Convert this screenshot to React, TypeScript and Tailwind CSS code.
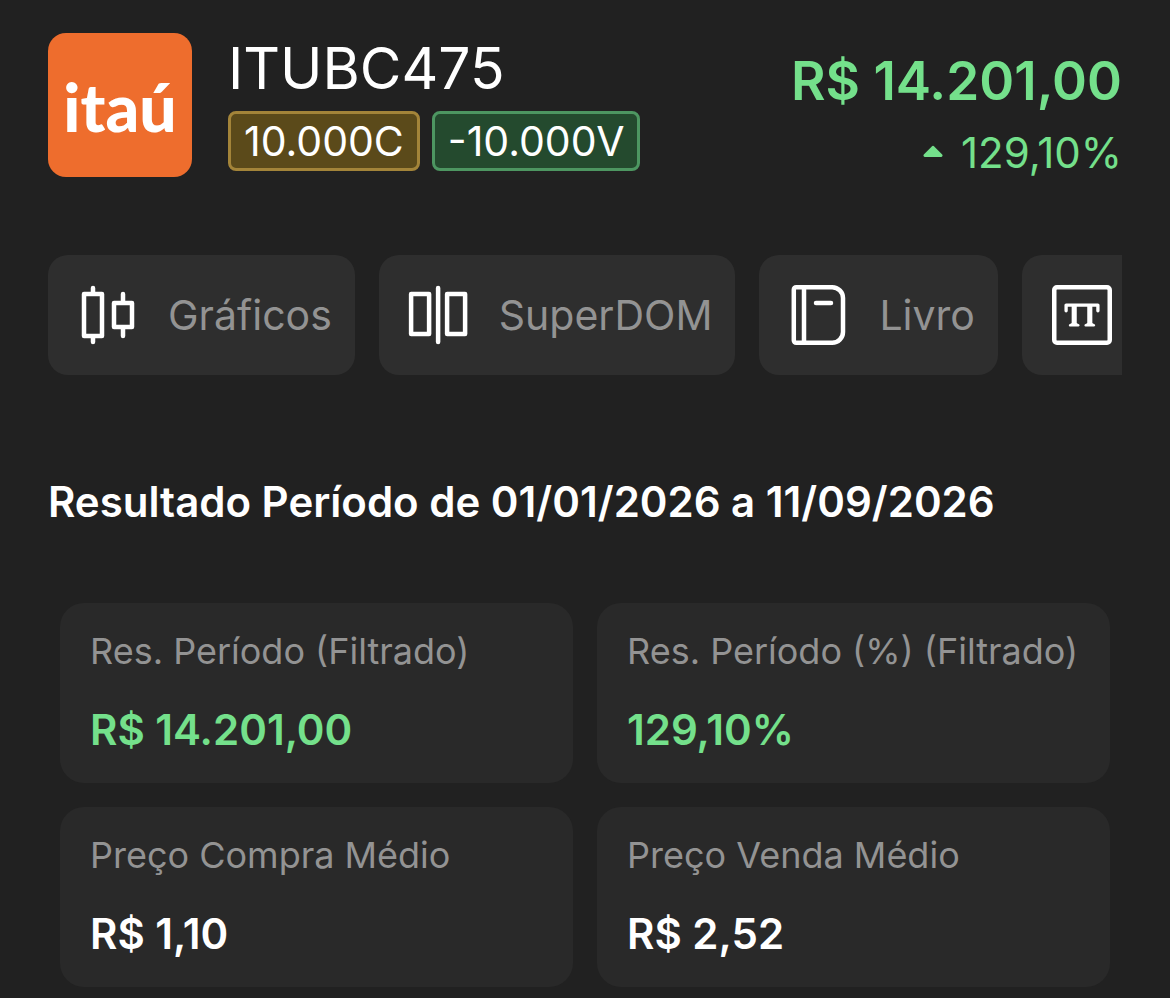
import React from 'react';

const ACTIONS = [
  { label: 'Gráficos', icon: <CandlesIcon /> },
  { label: 'SuperDOM', icon: <DomIcon /> },
  { label: 'Livro', icon: <BookIcon /> },
];

const RESULTS = [
  { label: 'Res. Período (Filtrado)', value: 'R$ 14.201,00', color: 'text-[#74e08b]' },
  { label: 'Res. Período (%) (Filtrado)', value: '129,10%', color: 'text-[#74e08b]' },
  { label: 'Preço Compra Médio', value: 'R$ 1,10', color: 'text-white' },
  { label: 'Preço Venda Médio', value: 'R$ 2,52', color: 'text-white' },
];

function Icon({ children }: { children: React.ReactNode }) {
  return (
    <svg
      viewBox="0 0 24 24"
      className="size-[72px] shrink-0 text-white"
      fill="none"
      stroke="currentColor"
      strokeWidth="1.5"
      strokeLinecap="round"
      strokeLinejoin="round"
      aria-hidden="true"
    >
      {children}
    </svg>
  );
}

function CandlesIcon() {
  return (
    <Icon>
      <path d="M4 5h6v14H4zM7 3v2M7 19v2M14 8h6v8h-6zM17 5v3M17 16v3" />
    </Icon>
  );
}

function DomIcon() {
  return (
    <Icon>
      <path d="M2.7 5h6v13.3h-6zM14.7 5h6v13.3h-6zM11.7 3v18" />
    </Icon>
  );
}

function BookIcon() {
  return (
    <Icon>
      <path d="M4.4 2.75h12a3.6 3.6 0 0 1 3.6 3.6v11.3a3.6 3.6 0 0 1-3.6 3.6h-12a.8.8 0 0 1-.8-.8V3.55a.8.8 0 0 1 .8-.8z" />
      <path d="M7 3v18M11 8h5" />
    </Icon>
  );
}

function TradesIcon() {
  return (
    <Icon>
      <rect x="2.75" y="2.75" width="18.5" height="18.5" rx="0.9" />
      <path d="M6.7 10.6V8.7h10.6v1.9" strokeWidth="1.1" />
      <path d="M9.4 8.6v6.6M14.6 8.6v6.6" strokeWidth="1.7" strokeLinecap="butt" />
      <path d="M8 15.4l1-.5h.8l1 .5zM13.200 15.400l1-.5h.8l1 .5z" strokeWidth="0.8" />
    </Icon>
  );
}

export default function App() {
  return (
    <main className="min-h-screen bg-[#212121] px-12 pt-[33px] pb-[11px] font-['Inter',sans-serif] text-white">
      {/* Asset header */}
      <header className="flex items-start justify-between">
        <div className="flex gap-9">
          <div className="flex size-36 shrink-0 items-center justify-center rounded-[18px] bg-[#ee6d2d] pt-1 font-['Lato',sans-serif] text-[66px] leading-[72px] font-black">
            itaú
          </div>
          <div className="flex flex-col">
            <h1 className="h-[78px] text-[57px] leading-[72px] font-normal whitespace-nowrap">ITUBC475</h1>
            <div className="flex gap-3 text-[41px] leading-[54px]">
              <span className="rounded-lg border-3 border-[#a38439] bg-[#5b4a1a] px-[13px]">10.000C</span>
              <span className="rounded-lg border-3 border-[#4d9661] bg-[#244a2e] px-[13px]">-10.000V</span>
            </div>
          </div>
        </div>
        <div className="flex flex-col items-end pt-3 text-[#74e08b]">
          <strong className="text-[53px] leading-[72px] font-semibold whitespace-nowrap">R$ 14.201,00</strong>
          <div className="flex items-center gap-[18px] text-[42px] leading-[72px]">
            <svg viewBox="0 0 20 16" className="h-4 w-5" fill="currentColor" aria-hidden="true">
              <path d="M.8 9.6 8.8 1.4a1.7 1.7 0 0 1 2.4 0l8 8.2c.8 1.1.3 2.4-1.2 2.4H2C.5 12 0 10.7.8 9.6z" />
            </svg>
            <span>129,10%</span>
          </div>
        </div>
      </header>

      {/* Shortcuts, scrolls sideways */}
      <nav className="mt-[66px] flex gap-6 overflow-hidden">
        {ACTIONS.map((action) => (
          <button
            key={action.label}
            type="button"
            className="flex shrink-0 cursor-pointer items-center gap-6 rounded-[20px] bg-[#2e2e2e] py-6 pr-[23px] pl-6 text-[41px] leading-[72px] whitespace-nowrap text-[#939393]"
          >
            {action.icon}
            {action.label}
          </button>
        ))}
        <button
          type="button"
          aria-label="Times & Trades"
          className="w-60 shrink-0 cursor-pointer rounded-[20px] bg-[#2e2e2e] p-6"
        >
          <TradesIcon />
        </button>
      </nav>

      <h2 className="mt-[100px] text-[42px] leading-[54px] font-semibold">
        Resultado Período de 01/01/2026 a 11/09/2026
      </h2>

      {/* Period results */}
      <dl className="mx-3 mt-[74px] grid grid-cols-2 gap-6">
        {RESULTS.map((item) => (
          <div key={item.label} className="h-[180px] rounded-3xl bg-[#292929] px-[30px] pt-6">
            <dt className="text-[36px] leading-[48px] whitespace-nowrap text-[#939393]">{item.label}</dt>
            <dd className={`mt-7 text-[42px] leading-[54px] font-semibold ${item.color}`}>{item.value}</dd>
          </div>
        ))}
      </dl>
    </main>
  );
}
